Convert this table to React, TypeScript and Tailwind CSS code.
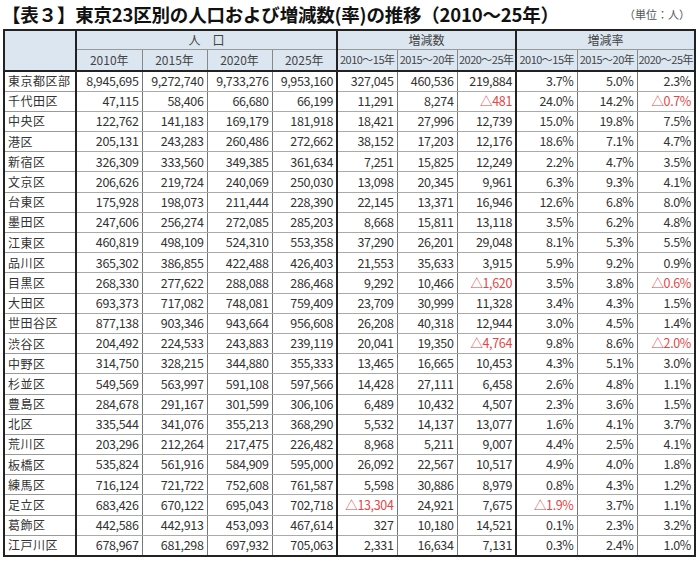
const ROWS: string[][] = [
  ["東京都区部", "8,945,695", "9,272,740", "9,733,276", "9,953,160", "327,045", "460,536", "219,884", "3.7%", "5.0%", "2.3%"],
  ["千代田区", "47,115", "58,406", "66,680", "66,199", "11,291", "8,274", "△481", "24.0%", "14.2%", "△0.7%"],
  ["中央区", "122,762", "141,183", "169,179", "181,918", "18,421", "27,996", "12,739", "15.0%", "19.8%", "7.5%"],
  ["港区", "205,131", "243,283", "260,486", "272,662", "38,152", "17,203", "12,176", "18.6%", "7.1%", "4.7%"],
  ["新宿区", "326,309", "333,560", "349,385", "361,634", "7,251", "15,825", "12,249", "2.2%", "4.7%", "3.5%"],
  ["文京区", "206,626", "219,724", "240,069", "250,030", "13,098", "20,345", "9,961", "6.3%", "9.3%", "4.1%"],
  ["台東区", "175,928", "198,073", "211,444", "228,390", "22,145", "13,371", "16,946", "12.6%", "6.8%", "8.0%"],
  ["墨田区", "247,606", "256,274", "272,085", "285,203", "8,668", "15,811", "13,118", "3.5%", "6.2%", "4.8%"],
  ["江東区", "460,819", "498,109", "524,310", "553,358", "37,290", "26,201", "29,048", "8.1%", "5.3%", "5.5%"],
  ["品川区", "365,302", "386,855", "422,488", "426,403", "21,553", "35,633", "3,915", "5.9%", "9.2%", "0.9%"],
  ["目黒区", "268,330", "277,622", "288,088", "286,468", "9,292", "10,466", "△1,620", "3.5%", "3.8%", "△0.6%"],
  ["大田区", "693,373", "717,082", "748,081", "759,409", "23,709", "30,999", "11,328", "3.4%", "4.3%", "1.5%"],
  ["世田谷区", "877,138", "903,346", "943,664", "956,608", "26,208", "40,318", "12,944", "3.0%", "4.5%", "1.4%"],
  ["渋谷区", "204,492", "224,533", "243,883", "239,119", "20,041", "19,350", "△4,764", "9.8%", "8.6%", "△2.0%"],
  ["中野区", "314,750", "328,215", "344,880", "355,333", "13,465", "16,665", "10,453", "4.3%", "5.1%", "3.0%"],
  ["杉並区", "549,569", "563,997", "591,108", "597,566", "14,428", "27,111", "6,458", "2.6%", "4.8%", "1.1%"],
  ["豊島区", "284,678", "291,167", "301,599", "306,106", "6,489", "10,432", "4,507", "2.3%", "3.6%", "1.5%"],
  ["北区", "335,544", "341,076", "355,213", "368,290", "5,532", "14,137", "13,077", "1.6%", "4.1%", "3.7%"],
  ["荒川区", "203,296", "212,264", "217,475", "226,482", "8,968", "5,211", "9,007", "4.4%", "2.5%", "4.1%"],
  ["板橋区", "535,824", "561,916", "584,909", "595,000", "26,092", "22,567", "10,517", "4.9%", "4.0%", "1.8%"],
  ["練馬区", "716,124", "721,722", "752,608", "761,587", "5,598", "30,886", "8,979", "0.8%", "4.3%", "1.2%"],
  ["足立区", "683,426", "670,122", "695,043", "702,718", "△13,304", "24,921", "7,675", "△1.9%", "3.7%", "1.1%"],
  ["葛飾区", "442,586", "442,913", "453,093", "467,614", "327", "10,180", "14,521", "0.1%", "2.3%", "3.2%"],
  ["江戸川区", "678,967", "681,298", "697,932", "705,063", "2,331", "16,634", "7,131", "0.3%", "2.4%", "1.0%"],
];

const WIDTHS = ["w-[72px]", "w-[66px]", "w-[65px]", "w-[65px]", "w-[65px]", "w-[60px]", "w-[60px]", "w-[59px]", "w-[61px]", "w-[60px]", "w-[58px]"];

const YEARS = ["2010年", "2015年", "2020年", "2025年"];
const SPANS = ["2010～15年", "2015～20年", "2020～25年"];

// columns that start a new group get the heavy left rule
function groupEdge(i: number) {
  return i === 1 || i === 5 || i === 8 ? "border-l-2 border-l-[#222]" : "";
}

export default function App() {
  return (
    <div className="w-[700px] h-[562px] bg-white font-['Noto_Sans_CJK_JP','Noto_Sans',sans-serif] text-[#333]">
      {/* Title */}
      <div className="flex h-[29px] items-center justify-between pl-[2px] pr-[10px]">
        <h1 className="text-[18.5px] font-bold leading-none tracking-[-0.2px] text-[#111]">
          【表３】東京23区別の人口および増減数(率)の推移（2010～25年）
        </h1>
        <span className="text-[11px] text-[#555]">（単位：人）</span>
      </div>

      {/* Table */}
      <table className="ml-[3px] w-[691px] table-fixed border-collapse border-2 border-[#222] text-[12px] leading-none">
        <colgroup>
          {WIDTHS.map((w, i) => (
            <col key={i} className={w} />
          ))}
        </colgroup>
        <thead className="bg-[#dce6f1] text-[#444]">
          <tr className="h-[19px]">
            <th rowSpan={2} className="border border-[#999] border-b-2 border-b-[#222] font-normal" />
            <th colSpan={4} className="border border-[#999] border-l-2 border-l-[#222] font-normal tracking-[12px] pl-[12px]">
              人口
            </th>
            <th colSpan={3} className="border border-[#999] border-l-2 border-l-[#222] font-normal">
              増減数
            </th>
            <th colSpan={3} className="border border-[#999] border-l-2 border-l-[#222] font-normal">
              増減率
            </th>
          </tr>
          <tr className="h-[22px]">
            {YEARS.map((y, i) => (
              <th
                key={y}
                className={`border border-[#888] border-b-2 border-b-[#222] font-normal ${i === 0 ? "border-l-2 border-l-[#222]" : ""}`}
              >
                {y}
              </th>
            ))}
            {[...SPANS, ...SPANS].map((s, i) => (
              <th
                key={i}
                className={`border border-[#888] border-b-2 border-b-[#222] px-0 font-normal whitespace-nowrap text-[11px] tracking-[-0.5px] ${i % 3 === 0 ? "border-l-2 border-l-[#222]" : ""}`}
              >
                {s}
              </th>
            ))}
          </tr>
        </thead>
        <tbody>
          {ROWS.map((row) => (
            <tr key={row[0]} className="h-[20.2px]">
              {row.map((v, i) =>
                i === 0 ? (
                  <td key={i} className="border border-[#999] pl-[3px] text-left tracking-[0.5px] whitespace-nowrap">
                    {v}
                  </td>
                ) : (
                  <td
                    key={i}
                    className={`border border-x-[#777] border-y-[#aaa] pr-[3px] text-right text-[12.5px] tracking-[-0.35px] whitespace-nowrap ${groupEdge(i)} ${v.startsWith("△") ? "text-[#e04848]" : ""}`}
                  >
                    {v}
                  </td>
                ),
              )}
            </tr>
          ))}
        </tbody>
      </table>
    </div>
  );
}
